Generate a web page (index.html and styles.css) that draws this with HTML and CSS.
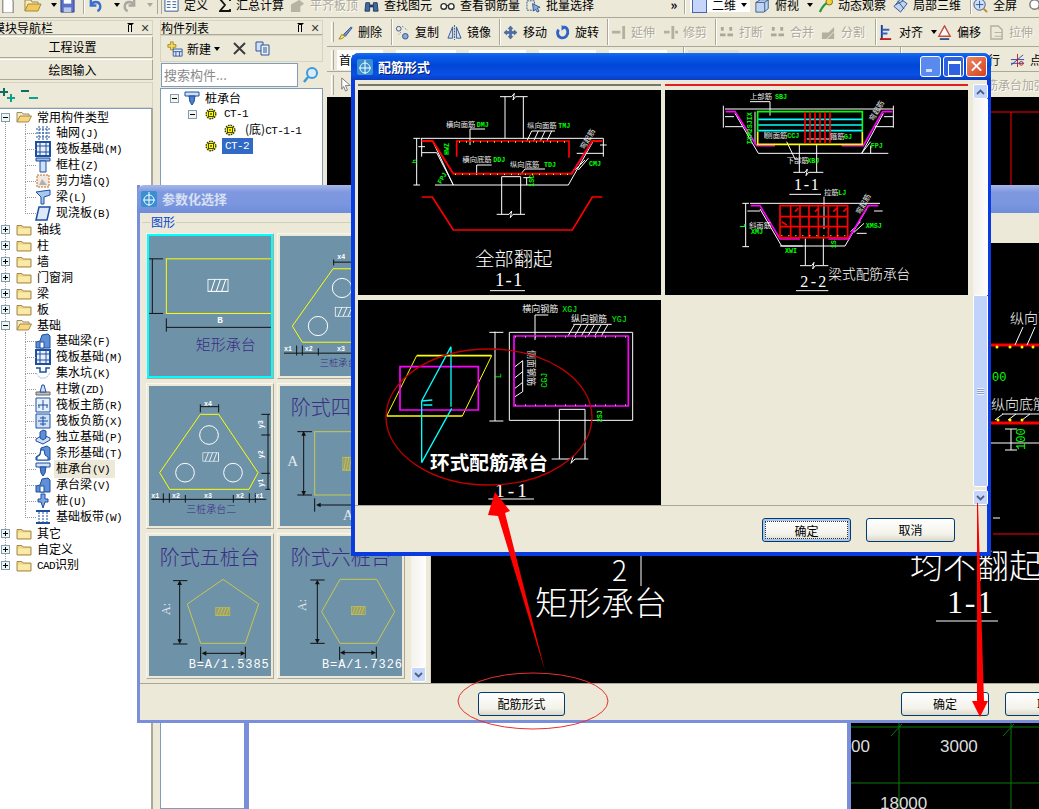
FILE: index.html
```html
<!DOCTYPE html>
<html lang="zh-CN">
<head>
<meta charset="utf-8">
<title>配筋形式</title>
<link rel="stylesheet" href="styles.css">
</head>
<body>
<svg class="defs" width="0" height="0" aria-hidden="true">
  <defs>
    <symbol id="exp-plus" viewBox="0 0 9 9"><rect x=".5" y=".5" width="8" height="8" fill="#f4f4ee" stroke="#7f9db9"/><path d="M2 4.500h5M4.500 2v5" stroke="#000"/></symbol>
    <symbol id="exp-minus" viewBox="0 0 9 9"><rect x=".5" y=".5" width="8" height="8" fill="#f4f4ee" stroke="#7f9db9"/><path d="M2 4.500h5" stroke="#000"/></symbol>
    <symbol id="folder" viewBox="0 0 16 16"><path d="M1 4.500h5l1 1.500h8v8H1z" fill="#f7d774" stroke="#9c8a58"/><path d="M2 7.500h12v5.500H2z" fill="#fbe9a8"/></symbol>
    <symbol id="folder-open" viewBox="0 0 16 16"><path d="M1 13V3.500h5l1 1.500h6v2" fill="#f5ecc4" stroke="#9c8a58"/><path d="M1 13l3-6h11.500l-3 6z" fill="#f9d67a" stroke="#9c8a58"/></symbol>
    <symbol id="gear" viewBox="0 0 12 12"><circle cx="6" cy="6" r="4.800" fill="#ff0" stroke="#332" stroke-width="1.400" stroke-dasharray="1.600 .9"/><rect x="3.500" y="3.500" width="5" height="5" fill="#ff0" stroke="#441"/><circle cx="6" cy="6" r=".9" fill="#441"/></symbol>
    <symbol id="pile-cap" viewBox="0 0 16 16"><path d="M1 2h14v4H1z" fill="#cfe0f8" stroke="#1c4fa0"/><path d="M5 6h6l-1 6-2 3-2-3z" fill="#4f7ec8" stroke="#1c4fa0"/></symbol>
    <symbol id="t-grid" viewBox="0 0 16 16"><path d="M1 4h14M1 8h14M1 12h14M4 1v14M8 1v14M12 1v14" stroke="#1c4fa0" stroke-dasharray="2 1" fill="none"/></symbol>
    <symbol id="t-raft" viewBox="0 0 16 16"><path d="M1 1h14v14H1z" fill="#e8f0fc" stroke="#1c4fa0" stroke-width="2"/><path d="M5 1v14M11 1v14M1 5h14M1 11h14" stroke="#1c4fa0" fill="none"/></symbol>
    <symbol id="t-col" viewBox="0 0 16 16"><path d="M1 1h14v3H1z" fill="#9dbcec" stroke="#1c4fa0"/><path d="M5 4h6v11H5z" fill="#cfe0f8" stroke="#1c4fa0"/></symbol>
    <symbol id="t-wall" viewBox="0 0 16 16"><path d="M2 2h12v12H2z" fill="#f2e8de" stroke="#c06a30" stroke-dasharray="2 1"/><path d="M4 12l3-6 5 6z" fill="#b0b0b0"/></symbol>
    <symbol id="t-beam" viewBox="0 0 16 16"><path d="M1 3l14-2v5L9 8v7H6V8z" fill="#a8c8ef" stroke="#1c4fa0"/></symbol>
    <symbol id="t-slab" viewBox="0 0 16 16"><path d="M4 2h11l-3 13H1z" fill="#dce9fb" stroke="#1c4fa0" stroke-width="1.500"/></symbol>
    <symbol id="t-fbeam" viewBox="0 0 16 16"><path d="M1 15V9l4-1 2-6 6-1 2 2v12z" fill="#5f8fd6" stroke="#1c4fa0"/><path d="M5 15v-6h4v6z" fill="#fff" stroke="#1c4fa0"/></symbol>
    <symbol id="t-sump" viewBox="0 0 16 16"><path d="M1 3h4v4h6V3h4" stroke="#1c4fa0" fill="none" stroke-width="1.500"/><path d="M1 8l4 5h6l4-5" stroke="#7f9db9" stroke-dasharray="1 1" fill="none"/></symbol>
    <symbol id="t-pier" viewBox="0 0 16 16"><path d="M1 11h14v3H1z" fill="#c0c0c0" stroke="#666"/><path d="M5 11l2-7h2l2 7z" fill="#cfe0f8" stroke="#1c4fa0"/></symbol>
    <symbol id="t-main" viewBox="0 0 16 16"><path d="M1 1h14v14H1z" fill="#e8f0fc" stroke="#1c4fa0"/><path d="M3 8h10M8 3v10" stroke="#1c4fa0"/><path d="M4 11v-3M12 11V8" stroke="#1c4fa0"/></symbol>
    <symbol id="t-neg" viewBox="0 0 16 16"><path d="M1 1h14v14H1z" fill="#cfe0f8" stroke="#1c4fa0"/><path d="M3 8h10M8 3v10M5 5h6M5 11h6" stroke="#1c4fa0"/></symbol>
    <symbol id="t-iso" viewBox="0 0 16 16"><path d="M1 10l7-4 7 3v2l-7 4-7-3z" fill="#cfe0f8" stroke="#1c4fa0"/><path d="M5 3l3-2 3 1v7l-3 2-3-2z" fill="#5f8fd6" stroke="#1c4fa0"/></symbol>
    <symbol id="t-strip" viewBox="0 0 16 16"><path d="M1 15v-3l4-3 1-6 6-2 3 2v12z" fill="#5f8fd6" stroke="#1c4fa0"/><path d="M2 15v-3l3-2 1-5 3 0 1 5 3 2v3z" fill="#fff" stroke="#1c4fa0"/></symbol>
    <symbol id="t-pile" viewBox="0 0 16 16"><path d="M6 1h4v5h3v3h-3l-2 6-2-6H3V6h3z" fill="#7fa6e0" stroke="#1c4fa0"/></symbol>
    <symbol id="t-band" viewBox="0 0 16 16"><path d="M1 2h14M1 14h14" stroke="#1c4fa0" stroke-width="2"/><path d="M4 3v10M8 3v10M12 3v10" stroke="#1c4fa0" stroke-dasharray="2 1"/></symbol>
    <symbol id="add" viewBox="0 0 15 14"><path d="M3 0h2v3h3v2H5v3H3V5H0V3h3z" fill="#0a6e62"/><path d="M10 6h2v3h3v2h-3v3h-2v-3H7V9h3z" fill="#10a08e"/></symbol>
    <symbol id="sub" viewBox="0 0 17 14"><path d="M0 2h8v2H0z" fill="#0a6e62"/><path d="M8 9h9v2H8z" fill="#10a08e"/></symbol>
    <symbol id="b-doc" viewBox="0 0 16 16"><path d="M3 0h8l3 3v13H3z" fill="#fff" stroke="#666"/></symbol>
    <symbol id="b-open" viewBox="0 0 18 16"><path d="M1 14V3h6l1 2h6v2" fill="#f5ecc4" stroke="#a38a3c"/><path d="M1 14l3-7h13l-3 7z" fill="#f3c85a" stroke="#a38a3c"/></symbol>
    <symbol id="b-save" viewBox="0 0 16 16"><path d="M1 0h14v15H1z" fill="#5a73c8" stroke="#2d3f86"/><path d="M4 0h8v6H4z" fill="#fff"/><path d="M4 10h8v5H4z" fill="#bcc6e8"/></symbol>
    <symbol id="b-undo" viewBox="0 0 16 16"><path d="M3 2v6h6M3 8c2-5 9-5 10 0 .5 3-1 5-3 6" fill="none" stroke="#3a6fd0" stroke-width="2.500"/></symbol>
    <symbol id="b-redo" viewBox="0 0 16 16"><path d="M13 2v6H7M13 8c-2-5-9-5-10 0-.5 3 1 5 3 6" fill="none" stroke="#a8a8a0" stroke-width="2.500"/></symbol>
    <symbol id="b-def" viewBox="0 0 16 16"><path d="M1 1h14v13H1z" fill="#fff" stroke="#31558f"/><path d="M3 4h4M3 7h4M3 10h4M9 4h4M9 7h4M9 10h4" stroke="#31558f"/></symbol>
    <symbol id="b-sigma" viewBox="0 0 12 14"><path d="M11 3V1H1l5 6-5 6h10v-2" fill="none" stroke="#111" stroke-width="1.800"/></symbol>
    <symbol id="b-flush" viewBox="0 0 16 16"><path d="M1 15V7l9-5 5 4-4 3v6z" fill="#b8b4a2"/></symbol>
    <symbol id="b-binoc" viewBox="0 0 16 16"><path d="M2 5h4v9H1zM10 5h4l1 9h-5z" fill="#44689c" stroke="#223b68"/><path d="M6 7h4v3H6z" fill="#223b68"/></symbol>
    <symbol id="b-glass" viewBox="0 0 16 16"><circle cx="4" cy="9" r="3" fill="#fff" stroke="#333" stroke-width="1.500"/><circle cx="12" cy="9" r="3" fill="#fff" stroke="#333" stroke-width="1.500"/><path d="M7 8h2" stroke="#333"/></symbol>
    <symbol id="b-batch" viewBox="0 0 16 16"><path d="M1 3h8v10H1z" fill="none" stroke="#31558f" stroke-dasharray="2 1"/><path d="M7 6l8 4-3 1 2 3-2 1-2-3-2 2z" fill="#8aa8d8" stroke="#31558f"/></symbol>
    <symbol id="b-cube" viewBox="0 0 17 17"><path d="M1 5l5-3h9v10l-5 4H1z" fill="#bfd4f0" stroke="#31558f"/><path d="M1 5h10v11M11 5l4-3" fill="none" stroke="#31558f"/></symbol>
    <symbol id="b-orbit" viewBox="0 0 16 16"><path d="M2 15C5 8 8 6 13 3" stroke="#2c9a3a" stroke-width="2.500" fill="none"/><circle cx="12" cy="4" r="3.500" fill="#f3d23a" stroke="#7a6a10"/></symbol>
    <symbol id="b-part" viewBox="0 0 16 16"><path d="M8 1l7 5-7 9-7-6z" fill="#bfd4f0" stroke="#31558f"/><path d="M5 3l7 9M3 7l8-4" stroke="#31558f"/></symbol>
    <symbol id="b-full" viewBox="0 0 16 16"><circle cx="7" cy="7" r="6" fill="#cfe0f8" stroke="#31558f"/><path d="M7 3v8M3 7h8" stroke="#31558f"/><path d="M11 11l4 4" stroke="#b98a30" stroke-width="2"/></symbol>
    <symbol id="b-search" viewBox="0 0 16 16"><circle cx="7" cy="7" r="5" fill="#fff" stroke="#777" stroke-width="1.500"/><path d="M11 11l4 4" stroke="#b98a30" stroke-width="2"/></symbol>
    <symbol id="b-brush" viewBox="0 0 16 16"><path d="M1 15l3-5 3 2c-1 2-3 3-6 3z" fill="#f0e060" stroke="#9a8a20"/><path d="M6 10l8-8 1 1-7 9z" fill="#7a90c8" stroke="#31558f"/></symbol>
    <symbol id="b-copy" viewBox="0 0 16 16"><circle cx="4" cy="4" r="2.500" fill="none" stroke="#31558f"/><circle cx="11" cy="12" r="3" fill="#8aa8d8" stroke="#31558f"/><path d="M8 1l1 2M11 4l2 1M6 8l-2 2" stroke="#31558f" stroke-dasharray="1 1"/></symbol>
    <symbol id="b-mirror" viewBox="0 0 16 16"><path d="M6 2L1 14h5zM10 2l5 12h-5z" fill="#cfe0f8" stroke="#31558f"/><path d="M8 0v16" stroke="#31558f" stroke-dasharray="2 1"/></symbol>
    <symbol id="b-move" viewBox="0 0 16 16"><path d="M8 1l2.500 3H9v3h3V5.500L15 8l-3 2.500V9H9v3h1.500L8 15l-2.500-3H7V9H4v1.500L1 8l3-2.500V7h3V4H5.500z" fill="#4a73b8" stroke="#223b68" stroke-width=".5"/></symbol>
    <symbol id="b-rotate" viewBox="0 0 16 16"><path d="M9 2c5 .5 6 6 3 10-3 3-8 2-9-2-.6-2 0-4 1-5" fill="none" stroke="#2f62c8" stroke-width="3"/><path d="M7 0v6l4-3z" fill="#2f62c8"/></symbol>
    <symbol id="b-extend" viewBox="0 0 16 16"><path d="M1 6h9v3H1zM12 1h3v14h-3z" fill="#b4b0a0"/></symbol>
    <symbol id="b-trim" viewBox="0 0 16 16"><path d="M1 6h6v3H1zM9 1h3v14H9zM13 6h3v3h-3z" fill="#b4b0a0"/></symbol>
    <symbol id="b-break" viewBox="0 0 16 16"><path d="M2 2h3v4H2zM11 2h3v4h-3zM1 9h6v3H1zM9 9h6v3H9z" fill="#aca899"/></symbol>
    <symbol id="b-split" viewBox="0 0 16 16"><path d="M1 15V8h7l6-6v13z" fill="#b4b0a0"/><path d="M6 15l8-8" stroke="#ece9d8"/></symbol>
    <symbol id="b-align" viewBox="0 0 16 16"><path d="M3 0v15" stroke="#1b3f8b" stroke-width="2"/><path d="M3 5h8M3 9h6" stroke="#2f62c8" stroke-width="2"/><path d="M1 15h12" stroke="#c02020" stroke-width="2"/></symbol>
    <symbol id="b-offset" viewBox="0 0 16 16"><path d="M8 1l6 11H2z" fill="#fff" stroke="#c84a3a" stroke-width="1.500"/><path d="M3 15h10" stroke="#31558f" stroke-width="2"/></symbol>
    <symbol id="b-stretch" viewBox="0 0 16 16"><path d="M2 1h8l4 4v10H2z" fill="none" stroke="#b4b0a0" stroke-width="1.500"/><path d="M6 8h8M6 12h8" stroke="#b4b0a0"/></symbol>
    <symbol id="b-new" viewBox="0 0 18 18"><path d="M1 4h3V1h3v3h3v3H7v3H4V7H1z" fill="#f6d860" stroke="#a08a20"/><path d="M7 9h10v8H7z" fill="#dce9fb" stroke="#31558f"/><path d="M7 12h10M10 12v5M14 12v5" stroke="#31558f"/></symbol>
    <symbol id="b-x" viewBox="0 0 13 13"><path d="M1 1l11 11M12 1L1 12" stroke="#3c3c3c" stroke-width="2"/></symbol>
    <symbol id="b-dup" viewBox="0 0 15 15"><path d="M1 1h7v9H1z" fill="#cfe0f8" stroke="#31558f"/><path d="M6 4h8v10H6z" fill="#e8f0fc" stroke="#31558f"/><path d="M8 7h4M8 9h4M8 11h4" stroke="#31558f"/></symbol>
    <symbol id="b-mag" viewBox="0 0 16 16"><circle cx="9" cy="6" r="5" fill="#d8ecfb" stroke="#3a9ad9" stroke-width="2"/><path d="M5 10l-4 5" stroke="#3a9ad9" stroke-width="2.500"/></symbol>
    <symbol id="b-cursor" viewBox="0 0 16 16"><path d="M4 1l9 8H8l2 5-2 1-2-5-2 3z" fill="#fff" stroke="#777"/></symbol>
    <symbol id="b-line" viewBox="0 0 16 16"><path d="M1 13L14 2M1 7h14M1 11h14" stroke="#2f3fa8"/><circle cx="12" cy="11" r="2" fill="none" stroke="#c02020"/><path d="M8 1v14" stroke="#c02020"/></symbol>
    <symbol id="b-plane" viewBox="0 0 16 16"><rect x=".5" y=".5" width="15" height="15" fill="#c6d6fb" stroke="#3a5fb0"/></symbol>
    <symbol id="appicon" viewBox="0 0 16 16"><rect width="16" height="16" rx="2" fill="#3a8fd0"/><circle cx="8" cy="9" r="5" fill="none" stroke="#dff"/><path d="M8 1v14M2 9h12" stroke="#fff"/></symbol>
    <symbol id="hatch" viewBox="0 0 60 36" preserveAspectRatio="none"><rect x="1.500" y="1.500" width="57" height="33" fill="none" stroke="#fff" stroke-width="3"/><path d="M10 35L22 1M25 35L37 1M40 35L52 1" stroke="#fff" stroke-width="3"/></symbol>
    <symbol id="hatchy" viewBox="0 0 60 36" preserveAspectRatio="none"><rect x="1" y="1" width="58" height="34" fill="#9aa06c" stroke="#c8c850" stroke-width="3"/><path d="M6 35L18 1M18 35L30 1M30 35L42 1M42 35L54 1" stroke="#c8c850" stroke-width="3"/></symbol>
  </defs>
</svg>

<div class="app">
  <header class="bar bar-top">
    <span class="tool"><svg class="ic"><use href="#b-doc"/></svg></span>
    <span class="tool"><svg class="ic ic18"><use href="#b-open"/></svg></span>
    <span class="drop"></span>
    <span class="tool"><svg class="ic"><use href="#b-save"/></svg></span>
    <span class="sep"></span>
    <span class="tool"><svg class="ic"><use href="#b-undo"/></svg></span>
    <span class="drop"></span>
    <span class="tool"><svg class="ic"><use href="#b-redo"/></svg></span>
    <span class="drop off"></span>
    <span class="sep dbl"></span>
    <span class="tool"><svg class="ic"><use href="#b-def"/></svg>定义</span>
    <span class="tool"><svg class="ic ic12"><use href="#b-sigma"/></svg>汇总计算</span>
    <span class="tool off"><svg class="ic"><use href="#b-flush"/></svg>平齐板顶</span>
    <span class="tool"><svg class="ic"><use href="#b-binoc"/></svg>查找图元</span>
    <span class="tool"><svg class="ic"><use href="#b-glass"/></svg>查看钢筋量</span>
    <span class="tool"><svg class="ic"><use href="#b-batch"/></svg>批量选择</span>
    <span class="more">»</span>
    <span class="sep"></span>
    <span class="combo combo-view"><svg class="ic"><use href="#b-plane"/></svg>二维<b class="drop"></b></span>
    <span></span>
    <span class="tool"><svg class="ic"><use href="#b-cube"/></svg>俯视<b class="drop drop-in"></b></span>
    <span class="tool"><svg class="ic"><use href="#b-orbit"/></svg>动态观察</span>
    <span class="tool"><svg class="ic"><use href="#b-part"/></svg>局部三维</span>
    <span class="sep"></span>
    <span class="tool"><svg class="ic"><use href="#b-full"/></svg>全屏</span>
    <span class="tool"><svg class="ic"><use href="#b-search"/></svg></span>
  </header>

  <div class="work">
    <aside class="nav">
      <div class="phead"><span class="ptitle-cut">模块导航栏</span><span class="pctl"><i class="pin"></i><i class="cls">×</i></span></div>
      <button class="navbtn">工程设置</button>
      <button class="navbtn">绘图输入</button>
      <div class="navtools"><svg class="ad"><use href="#add"/></svg><svg class="ad ad-sub"><use href="#sub"/></svg></div>
      <div class="tree">
        <i class="tree-line"></i>
        <div class="row"><svg class="exp"><use href="#exp-minus"/></svg><svg class="ico"><use href="#folder-open"/></svg><span>常用构件类型</span></div>
        <div class="row kid"><svg class="ico"><use href="#t-grid"/></svg><span>轴网<i class="k">(J)</i></span></div>
        <div class="row kid"><svg class="ico"><use href="#t-raft"/></svg><span>筏板基础<i class="k">(M)</i></span></div>
        <div class="row kid"><svg class="ico"><use href="#t-col"/></svg><span>框柱<i class="k">(Z)</i></span></div>
        <div class="row kid"><svg class="ico"><use href="#t-wall"/></svg><span>剪力墙<i class="k">(Q)</i></span></div>
        <div class="row kid"><svg class="ico"><use href="#t-beam"/></svg><span>梁<i class="k">(L)</i></span></div>
        <div class="row kid last"><svg class="ico"><use href="#t-slab"/></svg><span>现浇板<i class="k">(B)</i></span></div>
        <div class="row"><svg class="exp"><use href="#exp-plus"/></svg><svg class="ico"><use href="#folder"/></svg><span>轴线</span></div>
        <div class="row"><svg class="exp"><use href="#exp-plus"/></svg><svg class="ico"><use href="#folder"/></svg><span>柱</span></div>
        <div class="row"><svg class="exp"><use href="#exp-plus"/></svg><svg class="ico"><use href="#folder"/></svg><span>墙</span></div>
        <div class="row"><svg class="exp"><use href="#exp-plus"/></svg><svg class="ico"><use href="#folder"/></svg><span>门窗洞</span></div>
        <div class="row"><svg class="exp"><use href="#exp-plus"/></svg><svg class="ico"><use href="#folder"/></svg><span>梁</span></div>
        <div class="row"><svg class="exp"><use href="#exp-plus"/></svg><svg class="ico"><use href="#folder"/></svg><span>板</span></div>
        <div class="row"><svg class="exp"><use href="#exp-minus"/></svg><svg class="ico"><use href="#folder-open"/></svg><span>基础</span></div>
        <div class="row kid"><svg class="ico"><use href="#t-fbeam"/></svg><span>基础梁<i class="k">(F)</i></span></div>
        <div class="row kid"><svg class="ico"><use href="#t-raft"/></svg><span>筏板基础<i class="k">(M)</i></span></div>
        <div class="row kid"><svg class="ico"><use href="#t-sump"/></svg><span>集水坑<i class="k">(K)</i></span></div>
        <div class="row kid"><svg class="ico"><use href="#t-pier"/></svg><span>柱墩<i class="k">(ZD)</i></span></div>
        <div class="row kid"><svg class="ico"><use href="#t-main"/></svg><span>筏板主筋<i class="k">(R)</i></span></div>
        <div class="row kid"><svg class="ico"><use href="#t-neg"/></svg><span>筏板负筋<i class="k">(X)</i></span></div>
        <div class="row kid"><svg class="ico"><use href="#t-iso"/></svg><span>独立基础<i class="k">(P)</i></span></div>
        <div class="row kid"><svg class="ico"><use href="#t-strip"/></svg><span>条形基础<i class="k">(T)</i></span></div>
        <div class="row kid"><svg class="ico"><use href="#pile-cap"/></svg><span class="hover">桩承台<i class="k">(V)</i></span></div>
        <div class="row kid"><svg class="ico"><use href="#t-fbeam"/></svg><span>承台梁<i class="k">(V)</i></span></div>
        <div class="row kid"><svg class="ico"><use href="#t-pile"/></svg><span>桩<i class="k">(U)</i></span></div>
        <div class="row kid last"><svg class="ico"><use href="#t-band"/></svg><span>基础板带<i class="k">(W)</i></span></div>
        <div class="row"><svg class="exp"><use href="#exp-plus"/></svg><svg class="ico"><use href="#folder"/></svg><span>其它</span></div>
        <div class="row"><svg class="exp"><use href="#exp-plus"/></svg><svg class="ico"><use href="#folder"/></svg><span>自定义</span></div>
        <div class="row"><svg class="exp"><use href="#exp-plus"/></svg><svg class="ico"><use href="#folder"/></svg><span><i class="k">CAD</i>识别</span></div>
      </div>
    </aside>

    <aside class="list">
      <div class="phead"><span>构件列表</span><span class="pctl"><i class="pin"></i><i class="cls">×</i></span></div>
      <div class="listtools">
        <svg class="ic ic18"><use href="#b-new"/></svg><span>新建</span><b class="drop"></b>
        <svg class="ic ic13 x-gap"><use href="#b-x"/></svg>
        <svg class="ic dup-gap"><use href="#b-dup"/></svg>
      </div>
      <div class="searchrow">
        <span class="searchbox">搜索构件...</span>
        <svg class="ic mag"><use href="#b-mag"/></svg>
      </div>
      <div class="ctree">
        <div class="crow"><svg class="exp"><use href="#exp-minus"/></svg><svg class="ico"><use href="#pile-cap"/></svg><span>桩承台</span></div>
        <div class="crow lv1"><svg class="exp"><use href="#exp-minus"/></svg><svg class="gear"><use href="#gear"/></svg><span class="k">CT-1</span></div>
        <div class="crow lv2"><svg class="gear"><use href="#gear"/></svg><span>(底)<i class="k">CT-1-1</i></span></div>
        <div class="crow lv1b"><svg class="gear"><use href="#gear"/></svg><span class="k sel">CT-2</span></div>
      </div>
    </aside>

    <section class="stage">
      <div class="bar bar-edit">
        <span class="grip"></span>
        <span class="tool"><svg class="ic"><use href="#b-brush"/></svg>删除</span>
        <span class="sep"></span>
        <span class="tool"><svg class="ic"><use href="#b-copy"/></svg>复制</span>
        <span class="tool"><svg class="ic"><use href="#b-mirror"/></svg>镜像</span>
        <span class="sep"></span>
        <span class="tool"><svg class="ic"><use href="#b-move"/></svg>移动</span>
        <span class="tool"><svg class="ic"><use href="#b-rotate"/></svg>旋转</span>
        <span class="sep"></span>
        <span class="tool off"><svg class="ic"><use href="#b-extend"/></svg>延伸</span>
        <span class="tool off"><svg class="ic"><use href="#b-trim"/></svg>修剪</span>
        <span class="sep"></span>
        <span class="tool off"><svg class="ic"><use href="#b-break"/></svg>打断</span>
        <span class="tool off"><svg class="ic"><use href="#b-break"/></svg>合并</span>
        <span class="tool off"><svg class="ic"><use href="#b-split"/></svg>分割</span>
        <span class="sep"></span>
        <span class="tool"><svg class="ic"><use href="#b-align"/></svg>对齐<b class="drop drop-in"></b></span>
        <span class="tool"><svg class="ic"><use href="#b-offset"/></svg>偏移</span>
        <span class="tool off"><svg class="ic"><use href="#b-stretch"/></svg>拉伸</span>
      </div>
      <div class="bar bar-filter">
        <span class="grip"></span>
        <span class="combo">首层</span>
        <span class="combo">基础</span>
        <span class="combo">桩承台</span>
        <span class="combo"><i class="k">CT-2</i></span>
        <span class="combo">整体</span>
        <span class="sep"></span>
        <span class="combo gray"></span>
        <span class="tool off filler">钢筋绘制</span>
        <span class="more">»</span>
        <span class="sep"></span>
        <span></span>
        <span class="tool">平行</span>
        <span class="tool"><svg class="ic"><use href="#b-line"/></svg>点</span>
      </div>
      <div class="bar bar-draw">
        <span class="grip"></span>
        <svg class="ic"><use href="#b-cursor"/></svg>
        <span></span>
        <span class="tool off">筋承台加强筋</span>
      </div>
      <div class="canvas">
        <svg class="cad-top" viewBox="327 97 712 90" width="712" height="90"><path class="c-red" d="M991 112H1039M1011 112V187"/></svg>
      </div>
    </section>
  </div>

  <div class="backwin backwin-white"></div>
  <div class="backwin backwin-grid">
    <svg viewBox="851 723 188 86" width="188" height="86">
      <path class="c-green" d="M851 727H1039M851 783H1039M899 723V809M1011 723V809M891 736L902 724M1003 736L1014 724"/>
      <text class="c-num" x="940" y="752">3000</text>
      <text class="c-num" x="851" y="752">00</text>
      <text class="c-num" x="880" y="809">18000</text>
    </svg>
  </div>

  <!-- 参数化选择 -->
  <section class="win win-param">
    <div class="tbar tbar-off"><svg class="appico"><use href="#appicon"/></svg><span>参数化选择</span></div>
    <div class="param-body">
      <div class="param-left">
        <div class="grouphead"><i class="gl gl-s"></i><span>图形</span><i class="gl"></i></div>
        <div class="param-scroll">
          <div class="thumbs">
            <div class="thumb thumb-on">
              <svg viewBox="33 151 366 423" preserveAspectRatio="none">
                <rect class="y3" x="85" y="220" width="320" height="165"/>
                <path class="k3" d="M33 220H75M33 385H75M43 220V385M85 400V440M85 427H400"/>
                <use href="#hatch" x="208" y="280" width="64" height="40"/>
                <text class="wt" x="238" y="415" font-size="28">B</text>
                <text class="pt" x="173" y="495" font-size="45">矩形承台</text>
              </svg>
            </div>
            <div class="thumb">
              <svg viewBox="426 151 366 423" preserveAspectRatio="none">
                <path class="y3" d="M700 250H585L463 423L493 472H740"/>
                <circle class="w3" cx="612" cy="308" r="29"/><circle class="w3" cx="540" cy="423" r="29"/>
                <use href="#hatch" x="590" y="365" width="60" height="30"/>
                <path class="k3" d="M587 222V240M587 230H660M438 505H780M476 482V512M493 482V512M541 490V512"/>
                <text class="wt" x="598" y="222" font-size="20">x4</text>
                <text class="wt" x="438" y="497" font-size="20">x1</text><text class="wt" x="500" y="497" font-size="20">x2</text><text class="wt" x="597" y="497" font-size="20">x3</text>
                <text class="pt" x="545" y="545" font-size="28">三桩承台一</text>
              </svg>
            </div>
            <div class="thumb">
              <svg viewBox="33 603 366 420" preserveAspectRatio="none">
                <path class="y3" d="M187 688H242L360 863L333 913H95L65 863Z"/>
                <circle class="w3" cx="213" cy="750" r="28"/><circle class="w3" cx="141" cy="863" r="28"/><circle class="w3" cx="285" cy="863" r="28"/>
                <use href="#hatch" x="193" y="802" width="50" height="28"/>
                <path class="k3" d="M187 658V682M242 658V682M187 665H242M390 688V913M370 688H396M370 750H396M370 865H396M382 913H396M40 943H385M76 925V953M94 925V953M142 930V953M286 930V953M334 925V953M352 925V953"/>
                <text class="wt" x="198" y="662" font-size="20">x4</text>
                <text class="wt" x="40" y="938" font-size="20">x1</text><text class="wt" x="102" y="938" font-size="20">x2</text><text class="wt" x="198" y="938" font-size="20">x3</text><text class="wt" x="294" y="938" font-size="20">x2</text><text class="wt" x="352" y="938" font-size="20">x1</text>
                <text class="wt" transform="translate(376 730) rotate(-90)" font-size="20">y3</text>
                <text class="wt" transform="translate(376 820) rotate(-90)" font-size="20">y2</text>
                <text class="wt" transform="translate(376 905) rotate(-90)" font-size="20">y1</text>
                <text class="pt" x="145" y="985" font-size="30">三桩承台二</text>
              </svg>
            </div>
            <div class="thumb">
              <svg viewBox="426 603 366 420" preserveAspectRatio="none">
                <text class="pt" x="458" y="690" font-size="60">阶式四桩台</text>
                <rect class="d3" x="530" y="740" width="200" height="190"/>
                <use href="#hatchy" x="613" y="815" width="40" height="42"/>
                <path class="k3" d="M478 740H522M478 930H522M497 750V920M530 940V980M540 960H700"/>
                <path class="kf" d="M490 752h14l-7-14zM490 918h14l-7 14zM548 953v14l-14-7z"/>
                <text class="wt-s" x="448" y="842" font-size="45">A</text>
                <text class="wt-s" x="614" y="1005" font-size="45">A</text>
              </svg>
            </div>
            <div class="thumb">
              <svg viewBox="33 18 366 420" preserveAspectRatio="none">
                <text class="pt" x="65" y="105" font-size="60">阶式五桩台</text>
                <path class="d3" d="M255 148L362 222L322 340H188L148 222Z"/>
                <use href="#hatchy" x="232" y="232" width="45" height="26"/>
                <path class="k3" d="M105 152H148M105 342H148M125 160V335M188 350V392M322 350V385M195 370H315"/>
                <path class="kf" d="M118 165h14l-7-14zM118 328h14l-7 14zM205 363v14l-14-7zM308 363v14l14-7z"/>
                <text class="wt-s" transform="translate(95 255) rotate(-90)" font-size="36">A:</text>
                <text class="wt-m" x="152" y="415" font-size="36" textLength="240">B=A/1.5385</text>
              </svg>
            </div>
            <div class="thumb">
              <svg viewBox="426 18 366 420" preserveAspectRatio="none">
                <text class="pt" x="458" y="105" font-size="60">阶式六桩台</text>
                <path class="d3" d="M606 148H716L770 245L716 340H606L551 245Z"/>
                <use href="#hatchy" x="639" y="228" width="44" height="27"/>
                <path class="k3" d="M517 150H560M517 340H560M538 160V330M605 350V390M715 350V385M612 368H708"/>
                <path class="kf" d="M531 163h14l-7-14zM531 327h14l-7 14zM620 361v14l-14-7zM700 361v14l14-7z"/>
                <text class="wt-s" transform="translate(505 243) rotate(-90)" font-size="36">A:</text>
                <text class="wt-m" x="552" y="415" font-size="36" textLength="240">B=A/1.7326</text>
              </svg>
            </div>
          </div>
          <div class="sb sb-param"><span class="sb-fill"></span><span class="sb-btn"><svg viewBox="0 0 9 6"><path class="chev" d="M1 1l3.500 3.500L8 1"/></svg></span></div>
        </div>
      </div>
      <div class="param-right">
        <svg viewBox="431 243 608 440" width="608" height="440">
          <path class="c-red" d="M991 345H1039M991 423H1039" stroke-width="3"/>
          <path class="c-white" d="M993 518H1000M991 443H1039M1005 429H1017M1011 429V450M1005 450H1017M1015 345L1023 327M1027 345L1035 327M995 420L1003 414M1008 420L1016 414M1022 420L1030 414M1002 414H1039"/>
          <path class="c-red" d="M993 534H1039"/>
          <g class="c-yd"><circle cx="997" cy="347" r="1.500"/><circle cx="1010" cy="347" r="1.500"/><circle cx="1022" cy="347" r="1.500"/><circle cx="1033" cy="347" r="1.500"/><circle cx="998" cy="420" r="1.500"/><circle cx="1010" cy="420" r="1.500"/><circle cx="1022" cy="420" r="1.500"/></g>
          <text class="c-big" x="1010" y="323" font-size="14">纵向面</text>
          <text class="c-big" x="991" y="409" font-size="14">纵向底筋</text>
          <text class="c-gr" x="992" y="381" font-size="12">00</text>
          <text class="c-gr" transform="translate(1025 450) rotate(-90)" font-size="12">100</text>
          <text class="c-big" x="612" y="581" font-size="28">2</text>
          <path class="c-white" d="M641 556V586M936 621H998"/>
          <text class="c-big" x="535" y="615" font-size="33">矩形承台</text>
          <text class="c-big" x="910" y="578" font-size="33">均不翻起</text>
          <text class="c-ser" x="947" y="613" font-size="32" textLength="46">1-1</text>
        </svg>
      </div>
    </div>
    <footer class="param-foot">
      <button class="xpbtn b87">配筋形式</button>
      <button class="xpbtn b88 g336">确定</button>
      <button class="xpbtn b88 g16">取消</button>
    </footer>
  </section>

  <!-- 配筋形式 -->
  <section class="win win-rebar">
    <div class="tbar"><svg class="appico"><use href="#appicon"/></svg><span>配筋形式</span>
      <span class="wbtns"><i class="wb wb-min"></i><i class="wb wb-max"></i><i class="wb wb-close"></i></span>
    </div>
    <div class="rebar-main">
      <div class="gallery">
        <i class="rule"></i><i class="rule rule-red"></i>
        <div class="shot">
          <svg viewBox="9 15 909 615">
            <path class="w" d="M197 160H745M435 35H470L478 25L474 45L482 35H518M450 35V160M505 35V160M233 168L295 300M240 300H640L715 168M440 275H497M440 275V388M497 275V388M425 388H462L470 378L466 398L474 388H510M185 160V300M175 160H195M175 300H195M200 203H245L295 300M745 205H665M200 160V215M745 160V215M190 185H210M735 180H755M345 180V132H390M365 270V240H410M495 270L510 252H570M515 170L530 138M535 170L550 138M555 170L570 138M575 170L590 138M530 138H600M515 278V300M505 278H530M660 255L690 225M670 255L700 220"/>
            <path class="r6" d="M200 168H233L295 266H650L712 168H742"/>
            <path class="r5" d="M305 215V168H642V218"/>
            <path class="r5" d="M200 336H232L295 435H652L712 336H742"/>
            <path class="yd" d="M312 171H640" />
            <path class="yd" d="M300 268H648" />
            <path class="m2" d="M650 262L712 172"/>
            <text class="st" x="273" y="125">横向面筋</text><text class="sg" x="365" y="127">DMJ</text>
            <text class="st" x="517" y="129">纵向面筋</text><text class="sg" x="610" y="129">TMJ</text>
            <text class="st" x="322" y="230">横向底筋</text><text class="sg" x="415" y="232">DDJ</text>
            <text class="st" x="465" y="246">纵向底筋</text><text class="sg" x="567" y="246">TDJ</text>
            <text class="sg" x="702" y="243">CMJ</text>
            <text class="sg" transform="translate(283 210) rotate(-90)">HWZ</text>
            <text class="sg" transform="translate(187 235) rotate(-90)">h</text>
            <text class="sg" transform="translate(258 298) rotate(-60)">FPJ</text>
            <text class="sg" transform="translate(538 305) rotate(-90)">1SC</text>
            <text class="st" transform="translate(688 195) rotate(-60)">弯起筋</text>
            <text class="lt" x="360" y="543" font-size="58">全部翻起</text>
            <text class="sr" x="420" y="602" font-size="56" textLength="82">1-1</text>
            <path class="w" d="M405 617H510"/>
          </svg>
        </div>
        <div class="shot">
          <svg viewBox="15 15 909 615">
            <path class="w" d="M195 72H700M225 85L295 205H685M605 205L670 85M195 95H222M195 125H248M700 95H672M700 125H645M190 62V128M700 62V128M418 180V262M470 180V262M400 262H435L442 252L438 272L446 262H490M270 50H330V92M315 160V140M380 170L405 222M440 162H510M285 80V178M605 205L632 170M632 182V205"/>
            <path class="m5" d="M197 80H225L290 182H345M545 182H610L668 80H697"/>
            <path class="g5" d="M293 140V80H607V140"/>
            <path class="y5" d="M293 140V178H607V140"/>
            <path class="c5" d="M295 103H607M295 120H607M295 137H607"/>
            <path class="r5" d="M435 80V175M450 80V175M465 80V175M480 80V175M495 80V175M510 80V175"/>
            <text class="st" x="270" y="42">上部筋</text><text class="sg" x="345" y="42">SBJ</text>
            <text class="st" x="316" y="160">侧面筋</text><text class="sg" x="382" y="160">CCJ</text>
            <text class="st" x="510" y="162">箍筋</text><text class="sg" x="552" y="162">GJ</text>
            <text class="st" x="380" y="235">下部筋</text><text class="sg" x="442" y="235">XBJ</text>
            <text class="sg" x="632" y="188">FPJ</text>
            <text class="sg" transform="translate(276 178) rotate(-90)">IXM2SJIX</text>
            <text class="st" transform="translate(640 110) rotate(-60)">弯起筋</text>
            <text class="sr" x="402" y="315" font-size="48" textLength="74">1-1</text>
            <path class="w" d="M388 328H483"/>
            <path class="w" d="M270 355H660M257 355V485M247 355H267M247 485H267M300 372L365 483H555L620 372M262 378H300M642 378H668M492 335V432M360 483H428M436 460V540M490 460V540M420 542H455L462 532L458 552L466 542H505M572 440L602 410M582 442L612 415M590 445H620"/>
            <path class="m5" d="M272 362H300L360 462H420M505 462H565L625 362H655"/>
            <path class="r5" d="M360 362H563V458H360ZM392 362V458M420 362V458M447 362V458M475 362V458M505 362V458M532 362V458M360 395H563M360 425H563M365 410L380 420M405 380L415 370M465 380L475 370M520 380L530 370M550 380L560 370"/>
            <path class="yd" d="M364 452H560"/>
            <text class="st" x="492" y="330">拉筋</text><text class="sg" x="535" y="330">LJ</text>
            <text class="st" x="267" y="428">斜面筋</text><text class="sg" x="273" y="447">XMJ</text>
            <text class="sg" x="617" y="428">XMSJ</text><text class="sg" x="375" y="503">XWI</text>
            <text class="sg" transform="translate(256 428) rotate(-90)">L</text>
            <text class="sg" transform="translate(527 490) rotate(-90)">1S</text>
            <text class="st" transform="translate(600 390) rotate(-60)">弯起筋</text>
            <text class="sr" x="421" y="605" font-size="48" textLength="78">2-2</text>
            <path class="w" d="M408 617H505"/>
            <text class="lt" x="505" y="582" font-size="41">梁式配筋承台</text>
          </svg>
        </div>
        <div class="shot shot-low">
          <svg viewBox="9 15 909 615">
            <path class="y5" d="M185 182H410M95 363H322"/>
            <path class="y3t" d="M185 182L95 363M410 182L322 363"/>
            <path class="m5" d="M135 215H370V345H135Z"/>
            <path class="c3t" d="M288 155V335M288 155L200 318M200 318V503M200 503L290 340M200 318L232 315M205 330H232"/>
            <path class="w" d="M420 110V378M403 112H445M403 378H445M463 112H833V376H463ZM613 343H690M613 343V492M690 343V492M590 492H645L655 482L648 505L660 492H700M540 60H580M540 60V135M655 88H770M638 125L658 90M658 125L678 90M678 125L698 90M698 125L718 90M718 125L738 90M738 125L758 90M503 197L480 215M503 230L480 248M503 262L480 280M503 290L480 305M503 197V290"/>
            <path class="m5" d="M477 123H820V333H477Z"/>
            <path class="yd-w" d="M480 330H818M480 126H818"/>
            <text class="st3" x="502" y="50">横向钢筋</text><text class="sg3" x="622" y="50">XGJ</text>
            <text class="st3" x="648" y="80">纵向钢筋</text><text class="sg3" x="770" y="80">YGJ</text>
            <text class="st3" transform="translate(518 165) rotate(90)">侧面钢筋</text>
            <text class="sg3" transform="translate(575 278) rotate(-90)">CGJ</text>
            <text class="sg3" transform="translate(438 250) rotate(-90)">L</text>
            <text class="sg" transform="translate(742 382) rotate(-90)">2SJ</text>
            <text class="lt lt-b" x="225" y="525" font-size="59">环式配筋承台</text>
            <text class="sr" x="420" y="605" font-size="58" textLength="96">1-1</text>
            <path class="w" d="M400 612H537"/>
          </svg>
        </div>
      </div>
      <div class="sb sb-rebar">
        <span class="sb-btn"><svg viewBox="0 0 9 6"><path class="chev" d="M1 5l3.500-3.500L8 5"/></svg></span>
        <span class="sb-fill"></span>
        <span class="sb-thumb"><i></i></span>
        <span class="sb-btn"><svg viewBox="0 0 9 6"><path class="chev" d="M1 1l3.500 3.500L8 1"/></svg></span>
      </div>
    </div>
    <footer class="rebar-foot">
      <button class="xpbtn b89 def"><span>确定</span></button>
      <button class="xpbtn b89">取消</button>
    </footer>
  </section>

  <svg class="marks" viewBox="0 0 1039 809" width="1039" height="809" aria-hidden="true">
    <ellipse class="ring-dark" cx="489" cy="417" rx="103" ry="68"/>
    <ellipse class="ring" cx="533" cy="701" rx="75" ry="28"/>
    <polygon class="arrow" points="495,492 510,511 505,513 545,671 498,516 488,515"/>
    <polygon class="arrow" points="977,503 978,503 984,701 988,701 980,717 972,701 977,701"/>
  </svg>
</div>
</body>
</html>
```

FILE: styles.css
```css
* { box-sizing: border-box; }
html, body { margin: 0; padding: 0; background: #ece9d8; }
body { width: 1039px; height: 809px; overflow: hidden; font: 12px/16px "Noto Sans CJK SC", "Liberation Sans", sans-serif; color: #000; }
.defs { display: block; height: 0; }
button { font: inherit; color: inherit; }
i { font-style: normal; }
.k { font: 11px/16px "Liberation Mono", monospace; letter-spacing: -.6px; }

.app { position: relative; width: 1039px; height: 809px; overflow: hidden; background: #ece9d8; display: flex; flex-direction: column; }

/* toolbars */
.bar { display: grid; align-items: center; white-space: nowrap; overflow: hidden; }
.bar-top { flex: none; height: 18px; padding-bottom: 8px; border-bottom: 1px solid #aca899;
  grid-template-columns: 24px 24px 12px 20px 8px 23px 11px 23px 10px 9px 55px 71px 74px 76px 86px 142px 12px 10px 60px 5px 63px 75px 75px 5px 55px 11px; grid-template-rows: 10px; overflow: visible; }
.tool { display: flex; align-items: center; gap: 5px; height: 10px; overflow: visible; }
.tool.off { color: #aca899; text-shadow: 1px 1px 0 #fff; }
.ic { flex: none; width: 15px; height: 15px; }
.ic18 { width: 18px; height: 16px; }
.ic12 { width: 12px; height: 14px; }
.ic13 { width: 13px; height: 13px; }
.sep { justify-self: center; width: 2px; height: 26px; border-left: 1px solid #aca899; border-right: 1px solid #fff; }
.sep.dbl { width: 5px; border-left: 1px solid #aca899; border-right: 1px solid #aca899; }
.bar-top .sep { height: 17px; }
.drop { display: inline-block; width: 0; height: 0; border: 3px solid transparent; border-top: 4px solid #000; border-bottom: 0; justify-self: center; flex: none; }
.drop.off { border-top-color: #aca899; }
.drop-in { margin-left: 3px; }
.more { font-size: 13px; line-height: 10px; text-align: center; font-weight: 700; }
.combo { display: flex; align-items: center; justify-content: space-between; background: #fff; height: 20px; padding: 0 4px 0 2px; border-right: 13px solid #ece9d8; }
.combo-view { height: 14px; gap: 2px; background: #fff; border: 0; width: 60px; padding: 0 3px 0 2px; line-height: 10px; }
.combo.gray { background: #e0dfd0; border: 0; }

.grip { justify-self: center; width: 3px; height: 20px; border-left: 1px solid #fff; border-right: 1px solid #aca899; }

.work { flex: 1; display: grid; grid-template-columns: 155px 5px 163px 4px 712px; min-height: 0; }

/* panels */
.nav { grid-column: 1; display: flex; flex-direction: column; margin-left: -8px; width: 161px; }
.list { grid-column: 3; display: flex; flex-direction: column; min-width: 0; }
.phead { flex: none; margin-top: 2px; height: 15px; display: flex; justify-content: space-between; align-items: center; border: 1px solid #d7d3c0; border-bottom-color: #aca899; background: #ece9d8; }
.pctl { display: flex; gap: 7px; padding-right: 2px; align-items: center; }
.pin { display: block; width: 7px; height: 9px; border-top: 2px solid #000; border-left: 2px solid transparent; border-right: 2px solid transparent; background: linear-gradient(90deg, transparent 2px, #000 2px, #000 3px, transparent 3px); }
.cls { font: 14px/12px "Liberation Sans", sans-serif; width: 9px; color: #333; }
.navbtn { flex: none; height: 22px; margin-top: 1px; border: 1px solid #fff; border-right-color: #aca899; border-bottom-color: #aca899; background: #ece9d8; padding: 0; text-align: center; }
.navbtn + .navbtn { height: 21px; }
.navtools { flex: none; height: 26px; margin-top: 2px; padding-left: 7px; display: flex; align-items: center; border: 1px solid #d7d3c0; }
.ad { width: 15px; height: 14px; }
.ad-sub { width: 17px; margin-left: 6px; }

.tree { flex: 1; position: relative; background: #fff; border: 0 solid #7f9db9; border-top-width: 1px; border-right: 2px solid #aca899; padding: 0 0 0 9px; }
.tree-line { position: absolute; left: 13px; top: 8px; height: 448px; border-left: 1px dotted #999; }
.row { position: relative; display: flex; align-items: center; height: 16px; }
.exp { flex: none; width: 9px; height: 9px; margin-right: 6px; position: relative; }
.ico { flex: none; width: 16px; height: 16px; margin-right: 5px; }
.kid { padding-left: 34px; }
.kid::before { content: ""; position: absolute; left: 24px; top: -1px; height: 9px; width: 10px; border-left: 1px dotted #999; border-bottom: 1px dotted #999; }
.kid::after { content: ""; position: absolute; left: 24px; top: 8px; height: 8px; border-left: 1px dotted #999; }
.kid.last::after { display: none; }
.hover { background: #ece9d8; margin-left: -2px; padding: 0 2px; width: 61px; }

.listtools { flex: none; height: 27px; display: flex; align-items: center; gap: 3px; padding-left: 5px; border: 1px solid #d7d3c0; }
.x-gap { margin-left: 10px; }
.dup-gap { margin-left: 6px; }
.searchrow { flex: none; height: 26px; display: flex; align-items: center; padding-left: 1px; }
.searchbox { width: 137px; height: 24px; padding: 3px 2px; background: #fff; border: 1px solid #7f9db9; color: #8a8a8a; font-size: 13px; line-height: 16px; }
.mag { width: 16px; height: 16px; margin-left: 5px; }
.ctree { flex: 1; background: #fff; border: 1px solid #7f9db9; padding: 1px 0 0 9px; }
.crow { display: flex; align-items: center; height: 16px; }
.crow .exp { margin-right: 5px; }
.gear { flex: none; width: 12px; height: 12px; }
.crow.lv1 { padding-left: 18px; }
.crow.lv1 .exp { margin-right: 8px; }
.crow.lv1 .gear { margin-right: 7px; }
.crow.lv2 { padding-left: 54px; }
.crow.lv2 .gear { margin-right: 9px; }
.crow.lv1b { padding-left: 35px; }
.crow.lv1b .gear { margin-right: 5px; }
.sel { background: #316ac5; color: #fff; height: 16px; padding: 0 3px; width: 31px; }

/* right working area */
.stage { grid-column: 5; display: flex; flex-direction: column; min-width: 0; }
.bar-edit { flex: none; height: 29px; border-bottom: 1px solid #aca899;
  grid-template-columns: 11px 51px 6px 52px 50px 6px 52px 50px 6px 52px 50px 6px 51px 51px 51px 7px 58px 52px 50px; }
.bar-filter { flex: none; height: 25px; padding-bottom: 3px; border-bottom: 1px solid #aca899;
  grid-template-columns: 10px 59px 73px 70px 70px 71px 8px 51px 145px 11px 12px 69px 34px 29px; }
.bar-draw { flex: none; height: 25px;
  grid-template-columns: 11px 16px 632px auto; }
.bar-edit .tool, .bar-filter .tool, .bar-draw .tool { height: 16px; }
.canvas { flex: 1; background: #000; min-height: 0; }
.cad-top { display: block; }
.c-red { stroke: #f00; fill: none; }
.c-white { stroke: #fff; fill: none; }
.c-green { stroke: #0a7a0a; fill: none; }
.c-yd { fill: #ff0; }
.c-num { fill: #ddd; font: 17px "Liberation Sans", sans-serif; }
.c-big { fill: #fff; font-family: "Noto Sans CJK SC", sans-serif; font-weight: 300; }
.c-gr { fill: #0f0; font-family: "Liberation Mono", monospace; }
.c-ser { fill: #fff; font-family: "Liberation Serif", serif; }

.backwin { position: absolute; top: 640px; height: 169px; }
.backwin-white { left: 244px; width: 607px; background: #fff; border-left: 5px solid #7a8fdc; border-right: 4px solid #7a8fdc; }
.backwin-grid { left: 851px; width: 188px; background: #000; overflow: hidden; padding-top: 83px; }
.backwin-grid svg { display: block; }

/* windows */
.win { position: absolute; background: #ece9d8; display: flex; flex-direction: column; }
.win-param { left: 137px; top: 185px; width: 905px; height: 538px; border-left: 3px solid #7a8fdc; border-bottom: 3px solid #7a8fdc; }
.win-rebar { left: 351px; top: 53px; width: 640px; height: 503px; border: 4px solid #0a3be0; border-top: 0; border-radius: 8px 8px 0 0; }
.tbar { flex: none; height: 27px; margin: 0 -4px; padding-left: 6px; display: flex; align-items: center; gap: 5px; border-radius: 8px 8px 0 0; color: #fff; font-size: 13px; font-weight: 700; text-shadow: 1px 1px 0 #0a1f70;
  background: linear-gradient(#1a6ef0 0, #0a5be8 12%, #0047d8 45%, #0a50e4 80%, #0a3cc0 100%); }
.tbar-off { margin: 0 0 0 -3px; height: 28px; padding-left: 4px; border-radius: 8px 0 0 0; color: #d8e0f3; text-shadow: none; background: linear-gradient(#a6b7ea 0, #7f99e0 25%, #7a96df 70%, #6f8cd9 100%); }
.appico { width: 16px; height: 16px; flex: none; }
.wbtns { margin-left: auto; padding-right: 4px; display: flex; gap: 2px; }
.wb { display: block; width: 21px; height: 21px; border: 1px solid #fff; border-radius: 3px; background: #2f62e0; position: relative; }
.wb-min { background: #5a8aee; }
.wb-min::after { content: ""; position: absolute; left: 5px; bottom: 4px; width: 6px; height: 3px; background: #cfe0ff; }
.wb-max::after { content: ""; position: absolute; left: 4px; top: 4px; width: 11px; height: 11px; border: 1px solid #fff; border-top-width: 3px; }
.wb-close { background: linear-gradient(135deg, #e98a6a, #d8401c); }
.wb-close::before, .wb-close::after { content: ""; position: absolute; left: 3px; top: 8px; width: 13px; height: 2px; background: #fff; transform: rotate(45deg); }
.wb-close::after { transform: rotate(-45deg); }

.param-body { flex: 1; display: grid; grid-template-columns: 291px 1fr; min-height: 0; }
.param-left { display: flex; flex-direction: column; border-right: 1px solid #d7d3c0; overflow: hidden; }
.grouphead { flex: none; height: 20px; display: flex; align-items: center; gap: 1px; padding: 0 0 2px 2px; color: #0046d5; }
.gl { flex: 1; height: 1px; background: #d0d0bf; }
.gl-s { flex: none; width: 8px; }
.param-scroll { flex: 1; display: flex; padding-left: 6px; min-height: 0; }
.thumbs { flex: none; display: grid; grid-template-columns: 128px 128px; grid-auto-rows: 146px; gap: 4px 3px; }
.thumb { border: 1px solid; border-color: #f8f7ef #aca899 #aca899 #f8f7ef; padding: 2px; }
.thumb svg { display: block; width: 122px; height: 140px; background: #6e92a8; }
.thumb-on { padding: 0; }
.thumb-on svg { width: 126px; height: 144px; border: 2px solid #0ff; }
.y3 { stroke: #ff0; stroke-width: 3; fill: none; }
.w3 { stroke: #fff; stroke-width: 3; fill: none; }
.k3 { stroke: #111; stroke-width: 3; fill: none; }
.d3 { stroke: #c8c850; stroke-width: 3; fill: none; }
.kf { fill: #111; }
.wt { fill: #fff; font-family: "Liberation Mono", monospace; font-weight: 700; }
.wt-s { fill: #e4e8ee; font-family: "Liberation Serif", serif; }
.wt-m { fill: #fff; font-family: "Liberation Mono", monospace; }
.pt { fill: #3a2d84; font-family: "Noto Sans CJK SC", sans-serif; font-weight: 300; }

.param-right { background: #ece9d8; padding-top: 30px; overflow: hidden; }
.param-right svg { display: block; background: #000; }
.param-foot { flex: none; height: 37px; padding: 8px 0 0 338px; display: flex; align-items: flex-start; border-top: 1px solid #aca899; }

.xpbtn { flex: none; height: 24px; padding: 0; border: 1px solid #003c74; border-radius: 3px; background: linear-gradient(#fff, #f3f2ea 70%, #dcd8c8); text-align: center; }
.b87 { width: 87px; }
.b88 { width: 88px; }
.b89 { width: 89px; }
.g336 { margin-left: 336px; }
.g16 { margin-left: 16px; }
.def { box-shadow: inset 0 0 0 2px #a8c4ea; }
.def span { display: block; margin: 2px; height: 18px; line-height: 18px; border: 1px dotted #333; }

.rebar-main { flex: none; height: 425px; display: flex; padding: 4px 0 0 3px; }
.gallery { flex: none; width: 615px; display: grid; grid-template-columns: 303px 303px; column-gap: 4px; grid-template-rows: 6px 205px 210px; }
.rule { display: block; height: 2px; background: #77766a; }
.rule-red { background: #e02020; }
.shot { background: #000; }
.shot svg { display: block; width: 303px; height: 205px; }
.shot-low { padding-top: 5px; background: transparent; }
.shot-low svg { background: #000; }
.w { stroke: #fff; stroke-width: 3; fill: none; }
.r5 { stroke: #f00; stroke-width: 5; fill: none; }
.r6 { stroke: #f00; stroke-width: 6; fill: none; }
.m5 { stroke: #f0f; stroke-width: 5; fill: none; }
.m2 { stroke: #f0f; stroke-width: 3; fill: none; stroke-dasharray: 3 6; }
.g5 { stroke: #0f0; stroke-width: 5; fill: none; }
.y5 { stroke: #ff0; stroke-width: 5; fill: none; }
.c5 { stroke: #0ff; stroke-width: 5; fill: none; }
.y3t { stroke: #ff0; stroke-width: 3; fill: none; }
.c3t { stroke: #0ff; stroke-width: 4; fill: none; }
.yd { stroke: #ff0; stroke-width: 4; fill: none; stroke-dasharray: 3 18; }
.yd-w { stroke: #fff; stroke-width: 3; fill: none; stroke-dasharray: 3 27; }
.st { fill: #e8e8e8; font: 22px "Noto Sans CJK SC", sans-serif; }
.sg { fill: #0f0; font: 700 20px "Liberation Mono", monospace; }
.st3 { fill: #e8e8e8; font: 27px "Noto Sans CJK SC", sans-serif; }
.sg3 { fill: #0f0; font: 25px "Liberation Mono", monospace; }
.lt { fill: #fff; font-family: "Noto Sans CJK SC", sans-serif; font-weight: 300; }
.lt-b { font-weight: 700; }
.sr { fill: #fff; font-family: "Liberation Serif", serif; }

.sb { flex: none; width: 15px; display: flex; flex-direction: column; }
.sb-fill { display: block; flex: 1; background: linear-gradient(90deg, #f3f1ec, #fefefe); }
.sb-btn { flex: none; display: flex; align-items: center; justify-content: center; width: 15px; height: 15px; background: #c6d6fb; border: 1px solid #fff; border-radius: 2px; }
.sb-btn svg { width: 9px; height: 6px; }
.chev { stroke: #4d6185; stroke-width: 1.800; fill: none; }
.sb-thumb { flex: none; height: 192px; margin-bottom: 3px; display: flex; align-items: center; justify-content: center; background: #c1d3fb; border: 1px solid #fff; border-radius: 2px; }
.sb-thumb i { width: 7px; height: 7px; background: repeating-linear-gradient(#eef3fe 0 1px, #8aa0cc 1px 2px); }
.sb-rebar { height: 421px; }
.sb-param { width: 15px; margin: 0 0 0 6px; height: 449px; }
.rebar-foot { flex: 1; padding: 12px 32px 0 0; display: flex; justify-content: flex-end; align-items: flex-start; gap: 15px; border-top: 1px solid #aca899; }

.marks { position: absolute; left: 0; top: 0; pointer-events: none; }
.ring-dark { fill: none; stroke: #c00000; stroke-width: 1.300; }
.ring { fill: none; stroke: #e83030; stroke-width: 1; }
.arrow { fill: #f00; }
```
